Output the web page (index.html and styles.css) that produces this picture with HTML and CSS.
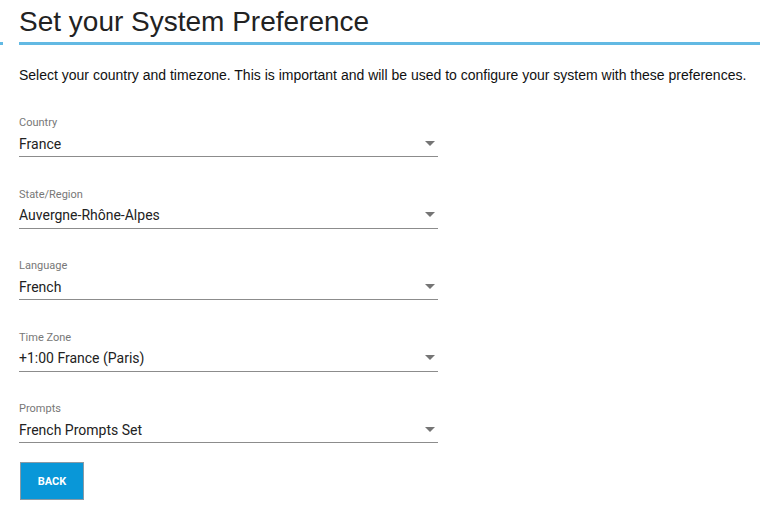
FILE: index.html
```html
<!DOCTYPE html>
<html>
<head>
<meta charset="utf-8">
<link rel="stylesheet" href="styles.css">
</head>
<body>
<div class="header">
  <span class="stub"></span>
  <h1 class="title">Set your System Preference</h1>
</div>
<p class="desc">Select your country and timezone. This is important and will be used to configure your system with these preferences.</p>
<div class="form">
  <div class="field">
    <div class="label">Country</div>
    <div class="select"><span class="value">France</span><span class="arrow"></span></div>
  </div>
  <div class="field">
    <div class="label">State/Region</div>
    <div class="select"><span class="value">Auvergne-Rhône-Alpes</span><span class="arrow"></span></div>
  </div>
  <div class="field">
    <div class="label">Language</div>
    <div class="select"><span class="value">French</span><span class="arrow"></span></div>
  </div>
  <div class="field">
    <div class="label">Time Zone</div>
    <div class="select"><span class="value">+1:00 France (Paris)</span><span class="arrow"></span></div>
  </div>
  <div class="field">
    <div class="label">Prompts</div>
    <div class="select"><span class="value">French Prompts Set</span><span class="arrow"></span></div>
  </div>
  <button class="back">BACK</button>
</div>
</body>
</html>
```

FILE: styles.css
```css
html, body {
  margin: 0;
  padding: 0;
  background: #fff;
}
body {
  font-family: "Liberation Sans", Arial, sans-serif;
  color: #222;
}
.header {
  display: flex;
  align-items: flex-end;
  gap: 16px;
  padding-top: 4px;
}
.stub {
  width: 3px;
  height: 3px;
  background: #62b9e3;
}
.title {
  flex: 1;
  margin: 0;
  font-weight: normal;
  font-size: 28px;
  line-height: 36px;
  color: #222;
  border-bottom: 3px solid #62b9e3;
  padding-bottom: 2px;
}
.desc {
  margin: 20px 0 0 19px;
  font-size: 14px;
  line-height: 20px;
  color: #111;
}
.form {
  padding-left: 19px;
  width: 419px;
  font-family: Roboto, "Liberation Sans", sans-serif;
}
.field {
  margin-top: 30.5px;
}
.field:first-child {
  margin-top: 31px;
}
.label {
  font-size: 11px;
  line-height: 13px;
  color: #777;
}
.select {
  display: flex;
  align-items: center;
  justify-content: space-between;
  height: 27px;
  border-bottom: 1px solid #8c8c8c;
}
.value {
  font-size: 14px;
  color: #222;
  padding-top: 2px;
}
.arrow {
  width: 0;
  height: 0;
  border-left: 5px solid transparent;
  border-right: 5px solid transparent;
  border-top: 5px solid #757575;
  margin-right: 3px;
  margin-top: 1px;
}
.back {
  display: block;
  margin: 19px 0 0 1px;
  width: 64px;
  height: 38px;
  background: #0997d8;
  border: 1px solid #8a9aa5;
  color: #fff;
  font-family: Roboto, "Liberation Sans", sans-serif;
  font-weight: bold;
  font-size: 11px;
  padding: 0;
}
```
